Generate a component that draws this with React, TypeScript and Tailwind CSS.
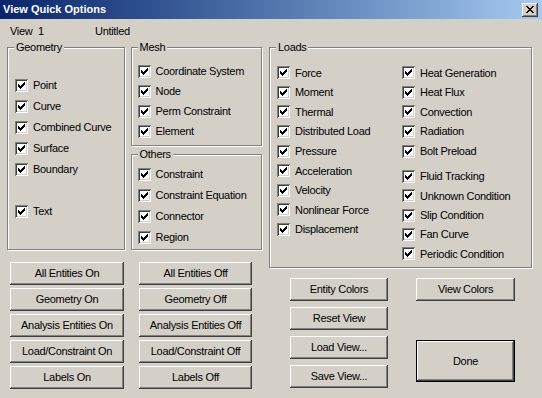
import React from 'react';

const raised =
  'shadow-[inset_-1px_-1px_#404040,inset_1px_1px_#ffffff,inset_-2px_-2px_#808080]';

function Check() {
  // classic 7x7 pixel check mark
  const px = [
    [6, 0], [5, 1], [6, 1], [0, 2], [4, 2], [5, 2], [6, 2],
    [0, 3], [1, 3], [3, 3], [4, 3], [5, 3], [0, 4], [1, 4], [2, 4], [3, 4], [4, 4],
    [1, 5], [2, 5], [3, 5], [2, 6],
  ];
  return (
    <svg width="7" height="7" viewBox="0 0 7 7" shapeRendering="crispEdges">
      {px.map(([x, y]) => (
        <rect key={`${x}-${y}`} x={x} y={y} width="1" height="1" fill="#000" />
      ))}
    </svg>
  );
}

function CheckRow({ label, h }: { label: string; h: string }) {
  return (
    <div className={`flex items-center ${h}`}>
      <div className="flex h-[13px] w-[13px] shrink-0 items-center justify-center bg-white shadow-[inset_1px_1px_#808080,inset_-1px_-1px_#ffffff,inset_2px_2px_#404040,inset_-2px_-2px_#d4d0c8]">
        <Check />
      </div>
      <span className="ml-[5px] whitespace-nowrap">{label}</span>
    </div>
  );
}

function Group({ title, className, children }: { title: string; className: string; children: React.ReactNode }) {
  return (
    <div className={`relative border border-[#808080] shadow-[inset_1px_1px_#ffffff,1px_1px_#ffffff] ${className}`}>
      <span className="absolute -top-[8px] left-[6px] bg-[#d4d0c8] px-[2px] leading-[14px]">{title}</span>
      {children}
    </div>
  );
}

function Btn({ label, className }: { label: string; className: string }) {
  return (
    <button className={`flex items-center justify-center bg-[#d4d0c8] tracking-[-0.3px] ${raised} ${className}`}>
      {label}
    </button>
  );
}

export default function App() {
  const geometry = ['Point', 'Curve', 'Combined Curve', 'Surface', 'Boundary'];
  const mesh = ['Coordinate System', 'Node', 'Perm Constraint', 'Element'];
  const others = ['Constraint', 'Constraint Equation', 'Connector', 'Region'];
  const loadsA = ['Force', 'Moment', 'Thermal', 'Distributed Load', 'Pressure', 'Acceleration', 'Velocity', 'Nonlinear Force', 'Displacement'];
  const loadsB1 = ['Heat Generation', 'Heat Flux', 'Convection', 'Radiation', 'Bolt Preload'];
  const loadsB2 = ['Fluid Tracking', 'Unknown Condition', 'Slip Condition', 'Fan Curve', 'Periodic Condition'];
  const leftOn = ['All Entities On', 'Geometry On', 'Analysis Entities On', 'Load/Constraint On', 'Labels On'];
  const leftOff = ['All Entities Off', 'Geometry Off', 'Analysis Entities Off', 'Load/Constraint Off', 'Labels Off'];

  return (
    <div className="h-[398px] w-[542px] overflow-hidden bg-[#d4d0c8] font-['Liberation_Sans',Arial,sans-serif] text-[11px] tracking-[-0.3px] text-black">
      {/* title bar */}
      <div className="flex h-[19px] items-center justify-between bg-gradient-to-r from-[#0a246a] to-[#a6caf0] pl-[3px] pr-[4px]">
        <span className="text-[11px] font-bold tracking-normal text-white">View Quick Options</span>
        <div className={`flex h-[14px] w-[16px] items-center justify-center bg-[#d4d0c8] ${raised}`}>
          <svg width="8" height="7" viewBox="0 0 8 7" shapeRendering="crispEdges">
            <path d="M0 0h2v1h-2zM6 0h2v1h-2zM1 1h2v1h-2zM5 1h2v1h-2zM2 2h4v1h-4zM3 3h2v1h-2zM2 4h4v1h-4zM1 5h2v1h-2zM5 5h2v1h-2zM0 6h2v1h-2zM6 6h2v1h-2z" fill="#000" />
          </svg>
        </div>
      </div>

      {/* view name */}
      <div className="flex h-[28px] pl-[10px] pt-[5px] leading-[14px]">
        <span className="w-[85px]">View&nbsp;&nbsp;1</span>
        <span>Untitled</span>
      </div>

      <div className="flex pl-[7px]">
        {/* left column */}
        <div className="flex w-[255px] flex-col">
          <div className="flex gap-[6px]">
            <Group title="Geometry" className="h-[203px] w-[118px] pl-[7px] pt-[27px]">
              {geometry.map((g) => (
                <CheckRow key={g} label={g} h="h-[21px]" />
              ))}
              <div className="h-[21px]" />
              <CheckRow label="Text" h="h-[21px]" />
            </Group>
            <div className="flex w-[132px] flex-col gap-[8px]">
              <Group title="Mesh" className="h-[99px] pl-[6px] pt-[13px]">
                {mesh.map((m) => (
                  <CheckRow key={m} label={m} h="h-[20px]" />
                ))}
              </Group>
              <Group title="Others" className="h-[96px] pl-[6px] pt-[9px]">
                {others.map((o) => (
                  <CheckRow key={o} label={o} h="h-[21px]" />
                ))}
              </Group>
            </div>
          </div>
          <div className="ml-[3px] mt-[12px] flex gap-[15px]">
            <div className="flex flex-col gap-[3px]">
              {leftOn.map((b) => (
                <Btn key={b} label={b} className="h-[23px] w-[114px]" />
              ))}
            </div>
            <div className="flex flex-col gap-[3px]">
              {leftOff.map((b) => (
                <Btn key={b} label={b} className="h-[23px] w-[113px]" />
              ))}
            </div>
          </div>
        </div>

        {/* right column */}
        <div className="ml-[7px] flex flex-col">
          <Group title="Loads" className="flex h-[221px] w-[263px] pl-[7px] pt-[15px]">
            <div className="w-[125px]">
              {loadsA.map((l) => (
                <CheckRow key={l} label={l} h="h-[19.6px]" />
              ))}
            </div>
            <div>
              {loadsB1.map((l) => (
                <CheckRow key={l} label={l} h="h-[19.6px]" />
              ))}
              <div className="h-[6px]" />
              {loadsB2.map((l) => (
                <CheckRow key={l} label={l} h="h-[19.3px]" />
              ))}
            </div>
          </Group>
          <div className="ml-[21px] mt-[10px] flex gap-[28px]">
            <div className="flex flex-col gap-[6px]">
              {['Entity Colors', 'Reset View', 'Load View...', 'Save View...'].map((b) => (
                <Btn key={b} label={b} className="h-[23px] w-[98px]" />
              ))}
            </div>
            <div className="flex flex-col">
              <Btn label="View Colors" className="h-[23px] w-[99px]" />
              <div className="mt-[39px] border border-black">
                <Btn label="Done" className="h-[40px] w-[97px]" />
              </div>
            </div>
          </div>
        </div>
      </div>
    </div>
  );
}
